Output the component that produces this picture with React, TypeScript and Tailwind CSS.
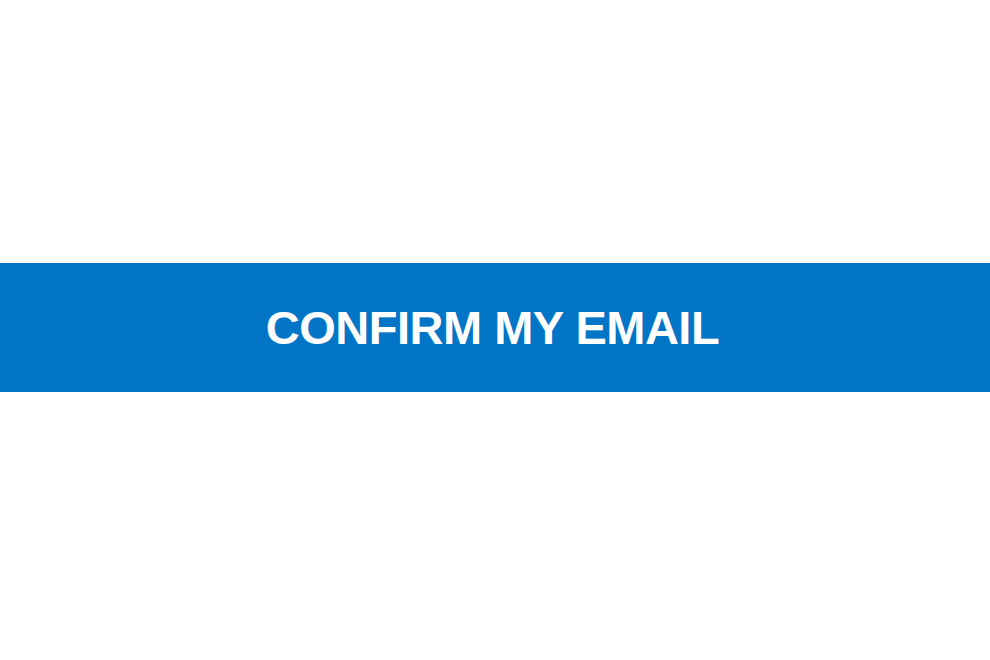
export default function App() {
  return (
    <div className="w-[990px] h-[660px] bg-white flex flex-col pt-[263px]">
      <a
        href="#"
        className="h-[129px] w-full bg-[#0275c6] flex items-center justify-center text-white font-bold text-[47px] leading-none tracking-[-0.5px] pr-[5px]"
        style={{ fontFamily: '"Liberation Sans", Arial, sans-serif' }}
      >
        CONFIRM MY EMAIL
      </a>
    </div>
  );
}
